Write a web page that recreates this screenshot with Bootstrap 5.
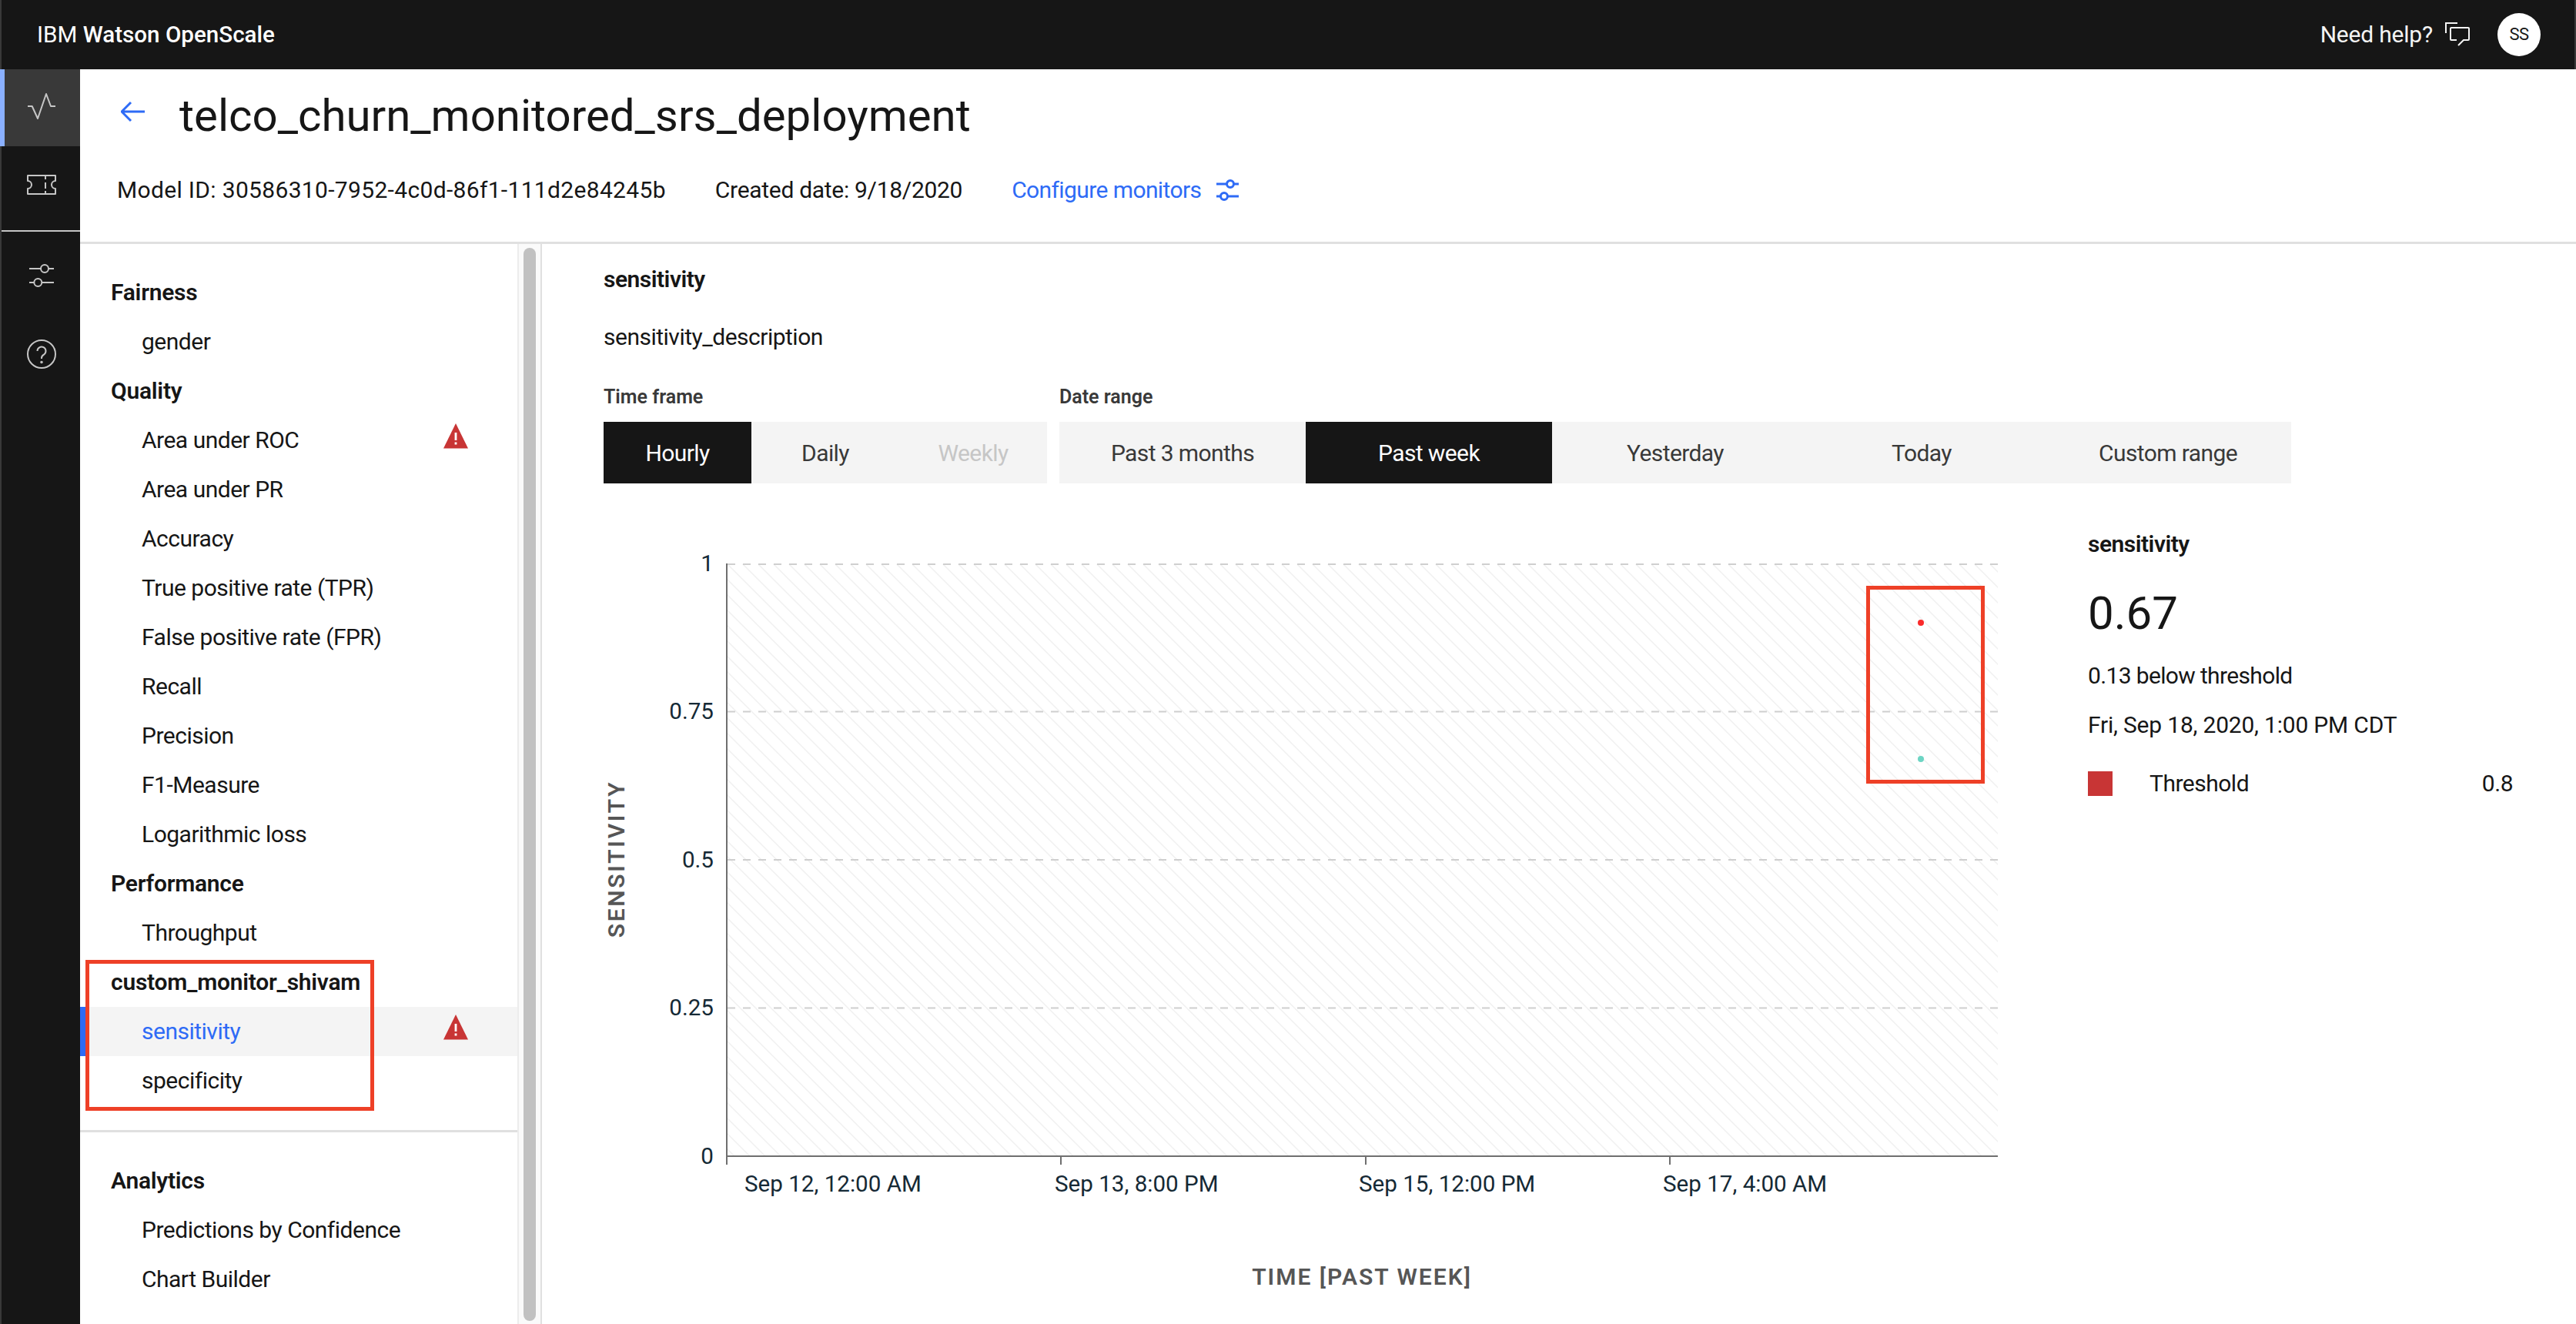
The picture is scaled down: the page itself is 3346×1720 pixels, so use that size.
<!DOCTYPE html>
<html lang="en">
<head>
    <meta charset="UTF-8">
    <title>IBM Watson OpenScale</title>
    <link rel="stylesheet" href="https://cdn.jsdelivr.net/npm/bootstrap@5.3.0/dist/css/bootstrap.min.css">
    <style>
        html, body { height: 100%; }
        body {
            font-family: Roboto, "Liberation Sans", sans-serif;
            font-size: 30px;
            line-height: 40px;
            letter-spacing: -0.5px;
            color: #161616;
            background: #fff;
            overflow: hidden;
        }
        .top-bar {
            height: 90px;
            padding: 0 44px 0 46px;
            background: #161616;
            color: #f4f4f4;
            border-left: 2px solid #393939;
            border-right: 2px solid #393939;
        }
        .brand-name { font-size: 29.6px; letter-spacing: 0; color: #fff; padding: 0; margin: 0; }
        .brand-name b { font-weight: 500; }
        .help-text { letter-spacing: -0.2px; }
        .avatar-dot {
            width: 56px;
            height: 56px;
            margin-left: 36px;
            border-radius: 50%;
            background: #fff;
            color: #161616;
            font-size: 22px;
        }
        .page-body { height: 1630px; }
        .side-rail {
            width: 104px;
            background: #161616;
            border-left: 2px solid #393939;
        }
        .rail-btn {
            height: 100px;
            padding-left: 2px;
        }
        .rail-btn.is-on {
            margin-left: -2px;
            padding: 0 2px 0 0;
            background: #393939;
            border-left: 6px solid #8ab0ff;
        }
        .rail-rule { height: 2px; margin: 9px 0; background: #c6c6c6; opacity: 1; border: 0; }
        .rail-icon { fill: none; stroke: #c6c6c6; stroke-width: 2; stroke-linejoin: round; }
        .page-head { height: 227px; border-bottom: 3px solid #e0e0e0; padding-left: 48px; }
        .head-title { padding-top: 22px; height: 137px; }
        .head-title h1 { font-size: 58.2px; line-height: 76px; font-weight: 400; letter-spacing: 0; margin: 0 0 0 44px; }
        .back-icon { margin-left: 5px; margin-top: 17px; fill: none; stroke: #2e6bf6; stroke-width: 3; }
        .head-meta { gap: 64px; }
        .meta-id { letter-spacing: 0.33px; }
        .meta-date { letter-spacing: -0.3px; }
        .config-link { color: #2e6bf6; text-decoration: none; letter-spacing: -0.6px; }
        .config-icon { fill: none; stroke: #2e6bf6; stroke-width: 3; margin-left: 18px; }
        .monitor-nav { width: 568px; padding-top: 31px; }
        .nav-row {
            height: 64px;
            padding: 0 64px 0 80px;
            border: 0;
            background: transparent;
            color: #161616;
        }
        .nav-title { padding-left: 40px; font-weight: 600; letter-spacing: -0.25px; }
        .nav-row.is-current {
            background: #f4f4f4;
            color: #2e6bf6;
            box-shadow: inset 8px 0 0 #2e6bf6;
        }
        .warn-icon { margin-left: auto; margin-bottom: 12px; }
        .callout-box { position: absolute; border: 5px solid #ee4027; pointer-events: none; }
        .nav-callout { left: 7px; top: 3px; width: 375px; height: 196px; }
        .nav-rule { height: 3px; margin: 32px 0 31px; background: #e0e0e0; opacity: 1; border: 0; }
        .scroll-track {
            width: 32px;
            padding: 5px 6px 0;
            background: #fafafa;
            border-left: 2px solid #ececec;
            border-right: 2px solid #e0e0e0;
        }
        .scroll-thumb { height: 1394px; background: #c1c1c1; border-radius: 8px; }
        .report-pane { padding: 26px 0 0 80px; }
        .report-name { font-weight: 600; margin-bottom: 35px; }
        .report-desc { margin-bottom: 41px; }
        .field-label { font-size: 25px; line-height: 34px; font-weight: 600; letter-spacing: 0; color: #393939; margin-bottom: 15px; }
        .seg-group { display: flex; --bs-border-width: 0px; }
        .seg-btn {
            height: 80px;
            padding: 0;
            border: 0;
            border-radius: 0;
            font-size: 30px;
            letter-spacing: -0.6px;
            background: #f4f4f4;
            color: #393939;
        }
        .seg-btn.time-cell { width: 192px; }
        .seg-btn.range-cell { width: 320px; }
        .seg-btn.is-on { background: #161616; color: #fff; }
        .seg-btn:disabled { background: #f4f4f4; color: #c6c6c6; opacity: 1; }
        .chart-text { font-family: Roboto, "Liberation Sans", sans-serif; font-size: 29.6px; letter-spacing: 0; fill: #152935; }
        .axis-name { font-family: Roboto, "Liberation Sans", sans-serif; font-size: 30px; font-weight: 600; fill: #565656; }
        .axis-x { letter-spacing: 2px; }
        .axis-y { letter-spacing: 2.7px; }
        .side-stats { width: 552px; padding-top: 59px; }
        .stat-title { font-weight: 600; margin-bottom: 32px; }
        .stat-value { font-size: 60px; line-height: 76px; letter-spacing: 0; margin-bottom: 23px; }
        .stat-delta { letter-spacing: -0.65px; margin-bottom: 24px; }
        .stat-time { letter-spacing: -0.2px; margin-bottom: 36px; }
        .legend-swatch { width: 32px; height: 32px; background: #c83535; margin-right: 48px; }
    </style>
</head>
<body>

    <nav class="navbar top-bar d-flex justify-content-between align-items-center flex-nowrap">
        <span class="navbar-brand brand-name">IBM <b>Watson OpenScale</b></span>
        <div class="d-flex align-items-center">
            <span class="help-text">Need help?</span>
            <svg class="ms-3" width="32" height="32" viewBox="0 0 32 32" fill="none" stroke="#f4f4f4" stroke-width="2">
                <path d="M1 14V1H16"/>
                <path d="M15 23H8a1 1 0 0 1-1-1V8a1 1 0 0 1 1-1H30a1 1 0 0 1 1 1V22a1 1 0 0 1-1 1H24L17 30"/>
            </svg>
            <span class="avatar-dot d-flex align-items-center justify-content-center">SS</span>
        </div>
    </nav>

    <div class="d-flex page-body">
        <aside class="side-rail flex-shrink-0">
            <div class="rail-btn is-on d-flex align-items-center justify-content-center">
                <svg class="rail-icon" width="40" height="40" viewBox="0 0 40 40"><polyline points="2,18 7.7,18 15,34 26,2 32,18 38,18"/></svg>
            </div>
            <div class="rail-btn d-flex align-items-center justify-content-center">
                <svg class="rail-icon" width="40" height="40" viewBox="0 0 40 40"><path d="M2 8h36v7a5 5 0 0 0 0 10v7H2v-7a5 5 0 0 0 0-10z"/><path d="M25 8v5M25 17v8M25 28v4"/></svg>
            </div>
            <hr class="rail-rule">
            <div class="rail-btn d-flex align-items-center justify-content-center">
                <svg class="rail-icon" width="40" height="40" viewBox="0 0 40 40"><path d="M4 9h15M29 9h7M4 27h6.300M20.300 27h15.700"/><circle cx="24" cy="9" r="5"/><circle cx="15.300" cy="27" r="5"/></svg>
            </div>
            <div class="rail-btn d-flex align-items-center justify-content-center">
                <svg class="rail-icon" width="40" height="40" viewBox="0 0 40 40"><circle cx="20" cy="20" r="18"/><path d="M14.500 16a5.500 5.500 0 1 1 8.500 4.600c-2 1.200-3 2.200-3 4.400v1"/><circle cx="20" cy="30.500" r="0.800"/></svg>
            </div>
        </aside>

        <main class="flex-grow-1 d-flex flex-column">
            <header class="page-head flex-shrink-0">
                <div class="head-title d-flex align-items-start">
                    <svg class="back-icon" width="32" height="32" viewBox="0 0 32 32"><path d="M1 16H31M13 4L1 16L13 28"/></svg>
                    <h1>telco_churn_monitored_srs_deployment</h1>
                </div>
                <div class="head-meta d-flex align-items-center">
                    <span class="meta-id">Model ID: 30586310-7952-4c0d-86f1-111d2e84245b</span>
                    <span class="meta-date">Created date: 9/18/2020</span>
                    <a class="config-link d-flex align-items-center" href="#">Configure monitors
                        <svg class="config-icon" width="32" height="32" viewBox="0 0 32 32"><path d="M2 8h13M25 8h6M2 24h5M17 24h14"/><circle cx="20" cy="8" r="4.500"/><circle cx="12" cy="24" r="4.500"/></svg>
                    </a>
                </div>
            </header>

            <div class="d-flex flex-grow-1">
                <div class="monitor-nav flex-shrink-0">
                    <div class="list-group list-group-flush">
                        <div class="list-group-item nav-row nav-title d-flex align-items-center">Fairness</div>
                        <div class="list-group-item nav-row d-flex align-items-center">gender</div>
                        <div class="list-group-item nav-row nav-title d-flex align-items-center">Quality</div>
                        <div class="list-group-item nav-row d-flex align-items-center">Area under ROC
                            <svg class="warn-icon" width="32" height="33" viewBox="0 0 32 33"><path d="M16 0L32 32.500H0z" fill="#c83535"/><path d="M14.600 12h2.800v10h-2.800zM14.600 24.600h2.800v2.800h-2.800z" fill="#fff"/></svg>
                        </div>
                        <div class="list-group-item nav-row d-flex align-items-center">Area under PR</div>
                        <div class="list-group-item nav-row d-flex align-items-center">Accuracy</div>
                        <div class="list-group-item nav-row d-flex align-items-center">True positive rate (TPR)</div>
                        <div class="list-group-item nav-row d-flex align-items-center">False positive rate (FPR)</div>
                        <div class="list-group-item nav-row d-flex align-items-center">Recall</div>
                        <div class="list-group-item nav-row d-flex align-items-center">Precision</div>
                        <div class="list-group-item nav-row d-flex align-items-center">F1-Measure</div>
                        <div class="list-group-item nav-row d-flex align-items-center">Logarithmic loss</div>
                        <div class="list-group-item nav-row nav-title d-flex align-items-center">Performance</div>
                        <div class="list-group-item nav-row d-flex align-items-center">Throughput</div>
                        <div class="position-relative">
                            <div class="list-group-item nav-row nav-title d-flex align-items-center">custom_monitor_shivam</div>
                            <div class="list-group-item nav-row is-current d-flex align-items-center">sensitivity
                                <svg class="warn-icon" width="32" height="33" viewBox="0 0 32 33"><path d="M16 0L32 32.500H0z" fill="#c83535"/><path d="M14.600 12h2.800v10h-2.800zM14.600 24.600h2.800v2.800h-2.800z" fill="#fff"/></svg>
                            </div>
                            <div class="list-group-item nav-row d-flex align-items-center">specificity</div>
                            <div class="callout-box nav-callout"></div>
                        </div>
                    </div>
                    <hr class="nav-rule">
                    <div class="list-group list-group-flush">
                        <div class="list-group-item nav-row nav-title d-flex align-items-center">Analytics</div>
                        <div class="list-group-item nav-row d-flex align-items-center">Predictions by Confidence</div>
                        <div class="list-group-item nav-row d-flex align-items-center">Chart Builder</div>
                    </div>
                </div>
                <div class="scroll-track flex-shrink-0"><div class="scroll-thumb"></div></div>

                <section class="report-pane flex-grow-1">
                    <div class="report-name">sensitivity</div>
                    <div class="report-desc">sensitivity_description</div>
                    <div class="d-flex gap-3">
                        <div>
                            <div class="field-label">Time frame</div>
                            <div class="seg-group btn-group" role="group">
                                <button class="btn seg-btn time-cell is-on">Hourly</button>
                                <button class="btn seg-btn time-cell">Daily</button>
                                <button class="btn seg-btn time-cell" disabled>Weekly</button>
                            </div>
                        </div>
                        <div>
                            <div class="field-label">Date range</div>
                            <div class="seg-group btn-group" role="group">
                                <button class="btn seg-btn range-cell">Past 3 months</button>
                                <button class="btn seg-btn range-cell is-on">Past week</button>
                                <button class="btn seg-btn range-cell">Yesterday</button>
                                <button class="btn seg-btn range-cell">Today</button>
                                <button class="btn seg-btn range-cell">Custom range</button>
                            </div>
                        </div>
                    </div>

                    <div class="d-flex">
                        <svg class="flex-shrink-0" width="1928" height="1092" viewBox="784 628 1928 1092">
                            <defs>
                                <pattern id="hatch" width="20" height="20" patternUnits="userSpaceOnUse" x="944" y="732">
                                    <path d="M-5 -5L25 25M-5 15L5 25M15 -5L25 5" stroke="#f0f0f0" stroke-width="1.500"/>
                                </pattern>
                            </defs>
                            <rect x="945" y="733" width="1650" height="768" fill="url(#hatch)"/>
                            <g stroke="#cfcfcf" stroke-width="2" stroke-dasharray="10 10">
                                <path d="M945 733H2595"/>
                                <path d="M945 924.500H2595"/>
                                <path d="M945 1117H2595"/>
                                <path d="M945 1309.500H2595"/>
                            </g>
                            <g stroke="#6f6f6f" stroke-width="2" fill="none">
                                <path d="M944 732V1513"/>
                                <path d="M944 1502H2595"/>
                                <path d="M1378 1502V1513M1774 1502V1513M2169 1502V1513"/>
                            </g>
                            <g text-anchor="end">
                                <text class="chart-text" x="927" y="742">1</text>
                                <text class="chart-text" x="927" y="934">0.75</text>
                                <text class="chart-text" x="927" y="1127">0.5</text>
                                <text class="chart-text" x="927" y="1319">0.25</text>
                                <text class="chart-text" x="927" y="1512">0</text>
                            </g>
                            <text class="chart-text" x="967" y="1548">Sep 12, 12:00 AM</text>
                            <text class="chart-text" x="1370" y="1548">Sep 13, 8:00 PM</text>
                            <text class="chart-text" x="1765" y="1548">Sep 15, 12:00 PM</text>
                            <text class="chart-text" x="2160" y="1548">Sep 17, 4:00 AM</text>
                            <text class="axis-name axis-x" x="1769" y="1669" text-anchor="middle">TIME [PAST WEEK]</text>
                            <text class="axis-name axis-y" text-anchor="middle" transform="translate(811 1116) rotate(-90)">SENSITIVITY</text>
                            <circle cx="2495" cy="809" r="4" fill="#fa2a2a"/>
                            <circle cx="2495" cy="986" r="4" fill="#6dd5c4"/>
                            <rect x="2426.500" y="763.500" width="149" height="252" fill="none" stroke="#ee4027" stroke-width="5"/>
                        </svg>
                        <div class="side-stats flex-shrink-0">
                            <div class="stat-title">sensitivity</div>
                            <div class="stat-value">0.67</div>
                            <div class="stat-delta">0.13 below threshold</div>
                            <div class="stat-time">Fri, Sep 18, 2020, 1:00 PM CDT</div>
                            <div class="d-flex align-items-center">
                                <span class="legend-swatch flex-shrink-0"></span>
                                <span>Threshold</span>
                                <span class="ms-auto">0.8</span>
                            </div>
                        </div>
                    </div>
                </section>
            </div>
        </main>
    </div>

    <script src="https://cdn.jsdelivr.net/npm/bootstrap@5.3.0/dist/js/bootstrap.bundle.min.js"></script>
</body>
</html>
